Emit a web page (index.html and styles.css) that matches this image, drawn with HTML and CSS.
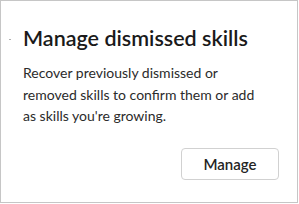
FILE: index.html
```html
<!DOCTYPE html>
<html lang="en">

<head>
    <meta charset="UTF-8">
    <meta name="viewport" content="width=device-width, initial-scale=1.0">
    <title>Manage dismissed skills</title>
    <link rel="stylesheet" href="styles.css">
</head>

<body>
    <div class="card">
        <span class="dot"></span>
        <h2 class="card_title">Manage dismissed skills</h2>
        <p class="card_text">Recover previously dismissed or removed skills to confirm them or add as skills you're growing.</p>
        <div class="card_footer">
            <a href="javascript:;" class="btn">Manage</a>
        </div>
    </div>
</body>

</html>
```

FILE: styles.css
```css
* {
    margin: 0;
    padding: 0;
    box-sizing: border-box;
}

body {
    background-color: #fff;
    font-family: Lato, "Noto Sans", sans-serif;
    color: #242424;
}

.card {
    position: relative;
    display: flex;
    flex-direction: column;
    width: 298px;
    height: 203px;
    padding: 21px 18px 22px 22px;
    border: 1px solid #c6c6c6;
    background-color: #fff;
}

/* 标题左边的小点 */
.dot {
    position: absolute;
    left: 8px;
    top: 38px;
    width: 2px;
    height: 1px;
    background-color: #b0b0b0;
}

.card_title {
    font-size: 21.5px;
    font-weight: 600;
    line-height: 32px;
    color: #1a1a1a;
}

.card_text {
    margin-top: 8px;
    margin-right: 16px;
    font-size: 14px;
    line-height: 21.5px;
    color: #2b2b2b;
}

.card_footer {
    margin-top: auto;
    display: flex;
    justify-content: flex-end;
}

.btn {
    display: inline-block;
    width: 98px;
    height: 32px;
    border: 1px solid #d1d1d1;
    border-radius: 4px;
    font-size: 15px;
    font-weight: 600;
    line-height: 30px;
    text-align: center;
    color: #242424;
    text-decoration: none;
}
```
